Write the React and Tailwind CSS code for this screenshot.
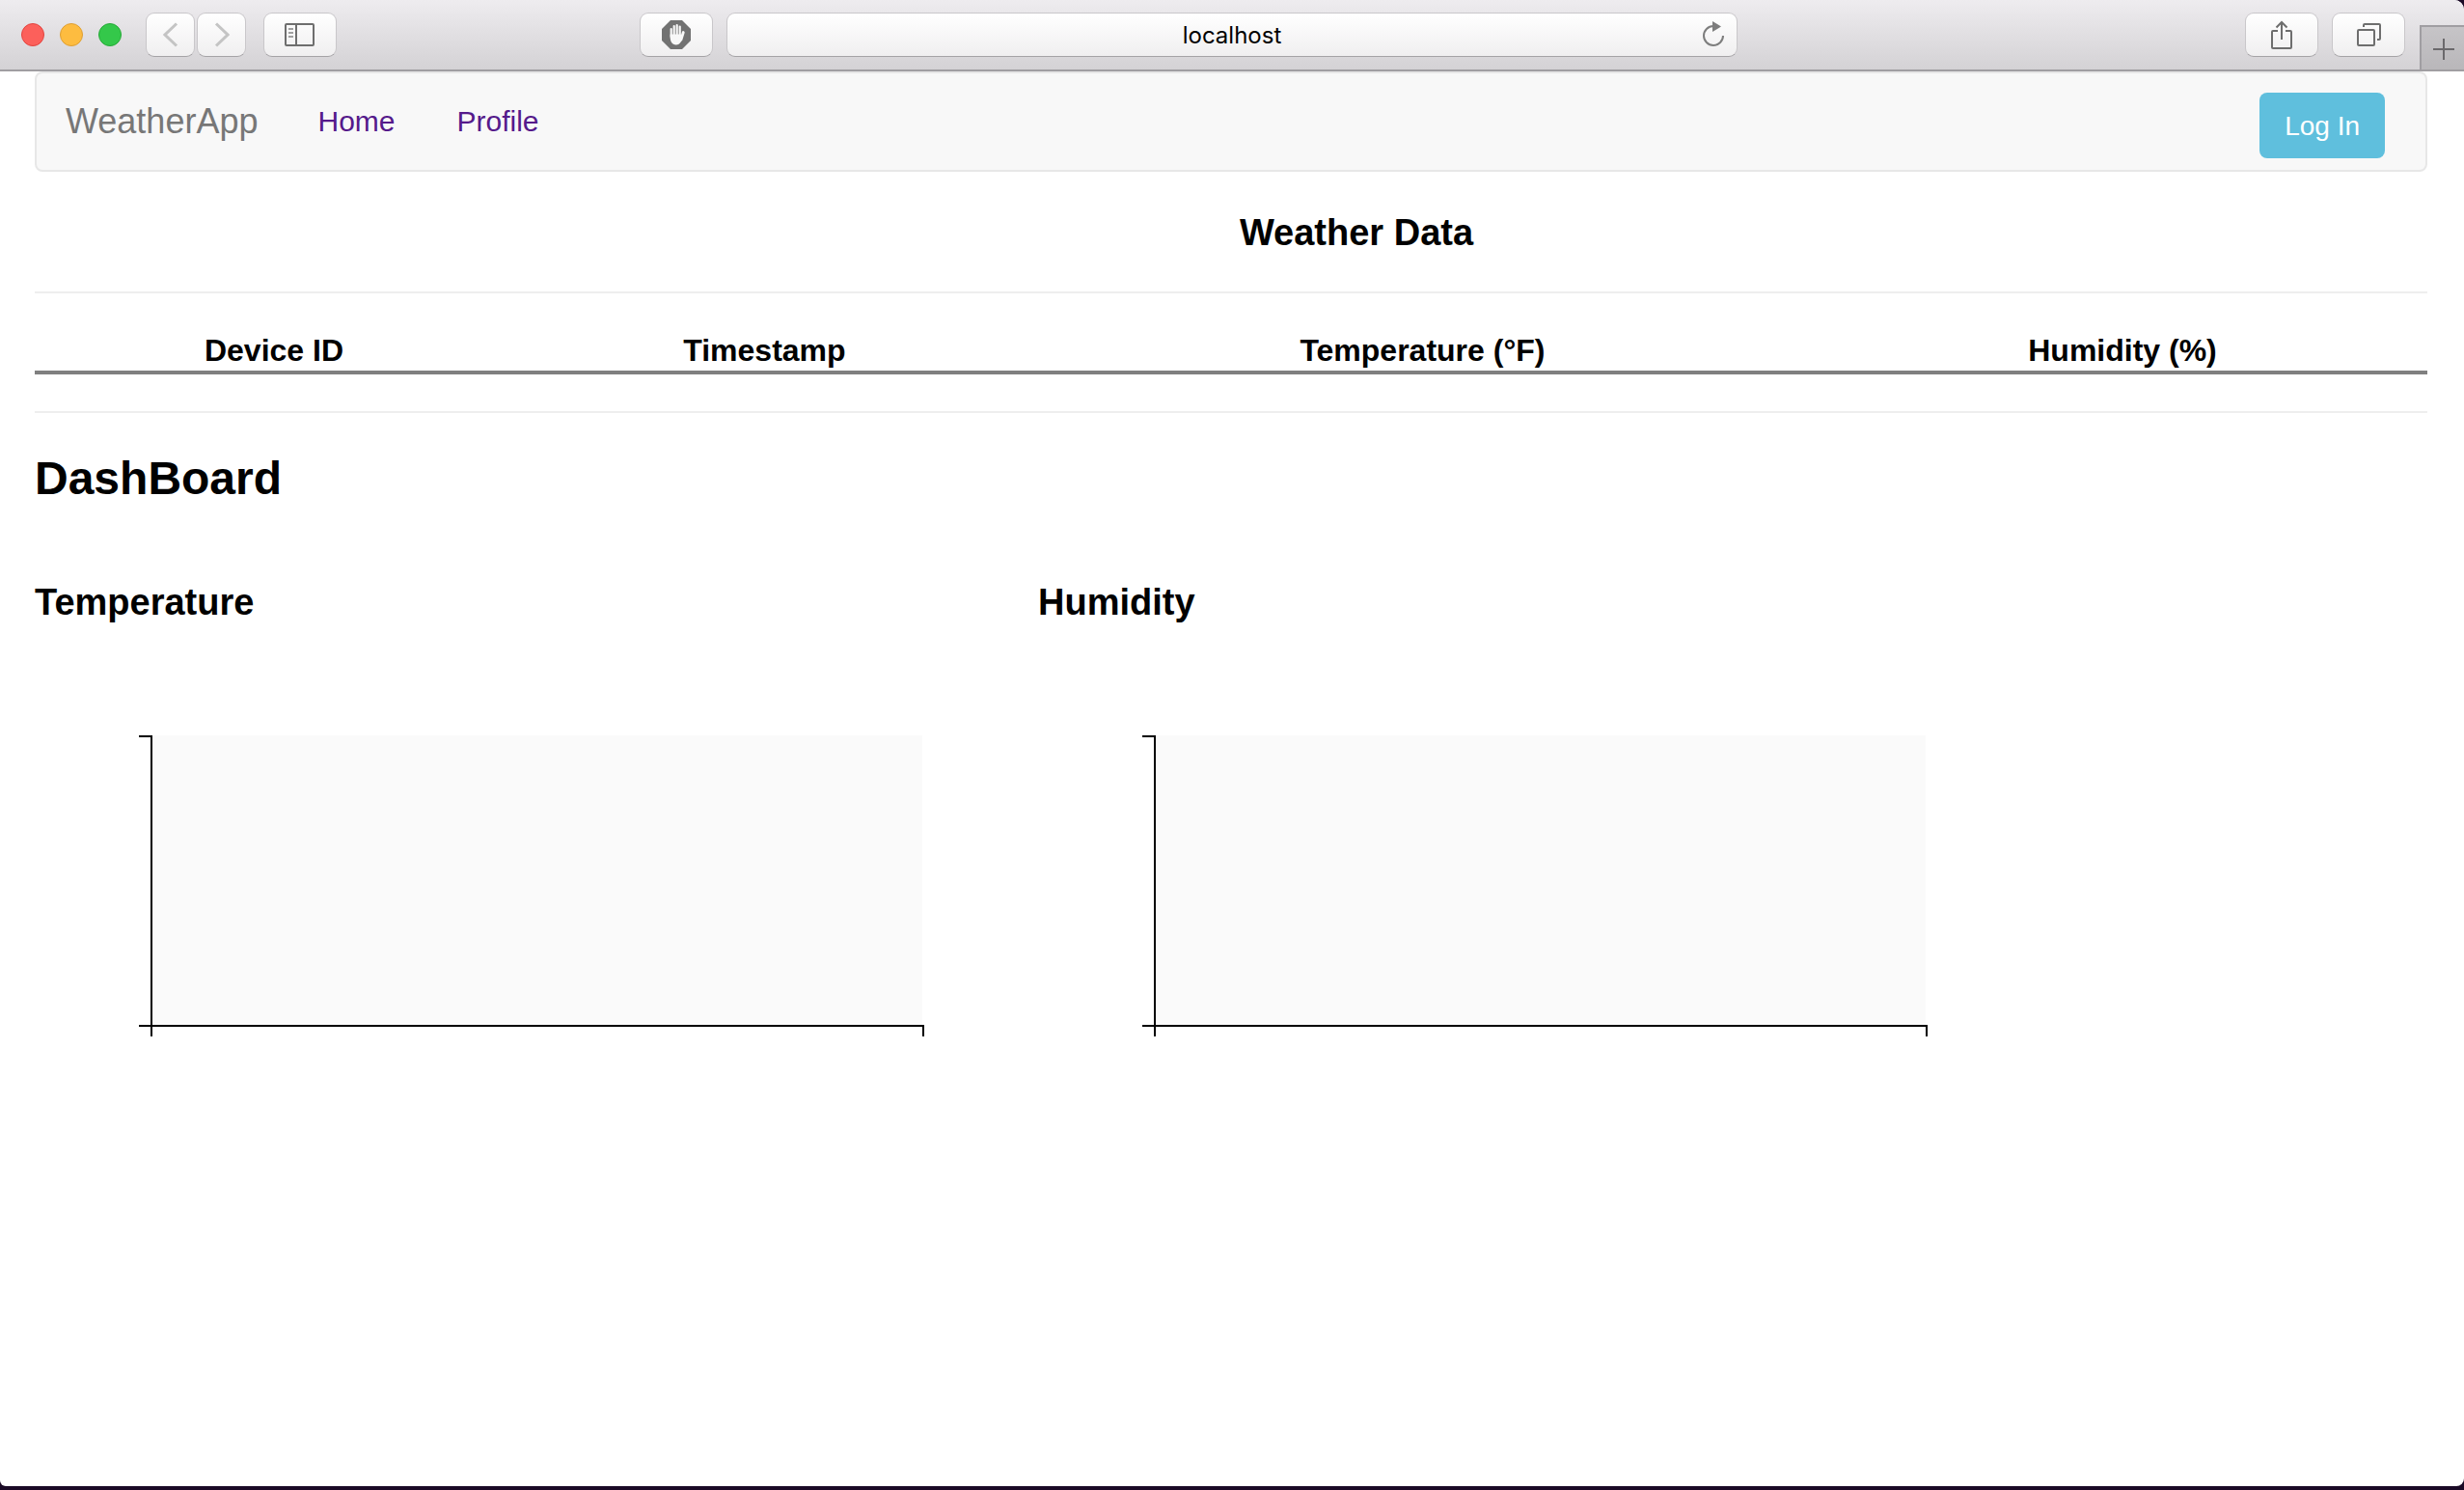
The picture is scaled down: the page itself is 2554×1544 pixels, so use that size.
const toolbarButton =
  'flex h-[46px] shrink-0 items-center justify-center rounded-[9px] border border-[#c9c7ca] border-b-[#a5a3a6] bg-linear-to-b from-white to-[#f0eff0]';

function TrafficLights() {
  return (
    <div className="flex gap-4">
      <button aria-label="Close" className="size-6 rounded-full border border-[#e2443f] bg-[#fc605b]" />
      <button aria-label="Minimize" className="size-6 rounded-full border border-[#de9f34] bg-[#fdbc40]" />
      <button aria-label="Zoom" className="size-6 rounded-full border border-[#27a938] bg-[#34c84a]" />
    </div>
  );
}

function Toolbar() {
  return (
    <header className="flex h-[74px] items-start rounded-tr-[10px] border-b-2 border-[#a09ea2] bg-linear-to-b from-[#eeecef] to-[#d4d2d5] pl-[22px]">
      <div className="flex h-[72px] flex-1 items-center">
        <TrafficLights />
        <div className="ml-[25px] flex gap-0.5">
          <button aria-label="Back" className={`${toolbarButton} w-[51px]`}>
            <svg width="16" height="26" viewBox="0 0 16 26" fill="none" stroke="#c4c4c4" strokeWidth="3">
              <path d="M14 1.5 2 13l12 11.5" />
            </svg>
          </button>
          <button aria-label="Forward" className={`${toolbarButton} w-[51px]`}>
            <svg width="16" height="26" viewBox="0 0 16 26" fill="none" stroke="#c4c4c4" strokeWidth="3">
              <path d="M2 1.5 14 13 2 24.5" />
            </svg>
          </button>
        </div>
        <button aria-label="Show sidebar" className={`${toolbarButton} ml-[18px] w-[76px]`}>
          <svg width="32" height="24" viewBox="0 0 32 24" fill="none" stroke="#6e6e6e" strokeWidth="2">
            <rect x="1" y="1" width="29" height="22" rx="1" />
            <path d="M12 1v22" />
            <path d="M4 6h5M4 10h5M4 14h5" stroke="#a0a0a0" />
          </svg>
        </button>
        <div className="flex flex-1 items-center justify-center gap-3.5 pr-[212px]">
          <button aria-label="Content blocker" className={`${toolbarButton} w-[76px]`}>
            <svg width="30" height="30" viewBox="0 0 30 30">
              <path d="M9 0h12l9 9v12l-9 9H9l-9-9V9z" fill="#727272" />
              <g stroke="#f8f8f8" strokeWidth="2.2" strokeLinecap="round">
                <path d="M9.7 9v8M12.700 6v10M15.700 5v10M18.700 6.500V16" />
                <path d="M22.300 12.500 20 20" strokeWidth="2.8" />
              </g>
              <path d="M8.600 14.500h11l1.500 2.500c0 4-2 8.500-6.300 8.500s-6.200-4-6.200-8.500z" fill="#f8f8f8" />
            </svg>
          </button>
          <div className={`${toolbarButton} w-[1048px] pr-3 pl-9`}>
            <input
              aria-label="Address"
              defaultValue="localhost"
              className="min-w-0 flex-1 bg-transparent pt-0.5 text-center font-[Inter,sans-serif] text-[24px] text-black outline-none"
            />
            <button aria-label="Reload">
              <svg width="24" height="30" viewBox="0 0 24 30" fill="none" stroke="#7d7d7d" strokeWidth="2">
                <path d="M12 6A10 10 0 1 0 22 16" />
                <path d="M11 1v11l9-5.500z" fill="#7d7d7d" stroke="none" />
              </svg>
            </button>
          </div>
        </div>
        <div className="flex gap-3.5">
          <button aria-label="Share" className={`${toolbarButton} w-[76px]`}>
            <svg width="24" height="32" viewBox="0 0 24 32" fill="none" stroke="#6e6e6e" strokeWidth="2">
              <path d="M8 12H3q-1 0-1 1v16q0 1 1 1h18q1 0 1-1V13q0-1-1-1h-5" />
              <path d="M12 21V3M6.500 8.500 12 3l5.500 5.500" />
            </svg>
          </button>
          <button aria-label="Show all tabs" className={`${toolbarButton} w-[76px]`}>
            <svg width="26" height="26" viewBox="0 0 26 26" fill="none" stroke="#6e6e6e" strokeWidth="2">
              <rect x="2" y="8" width="17" height="16" rx="1" />
              <path d="M8 5V3q0-1 1-1h15q1 0 1 1v14q0 1-1 1h-2" />
            </svg>
          </button>
        </div>
      </div>
      <button
        aria-label="New tab"
        className="ml-[15px] flex h-[46px] w-[46px] items-center justify-center self-end border-t-2 border-l-2 border-[#a09ea2] bg-linear-to-b from-[#c6c4c7] to-[#b9b7ba] pt-0.5 pl-0.5"
      >
        <svg width="22" height="22" viewBox="0 0 22 22" stroke="#6b696c" strokeWidth="2">
          <path d="M11 0v22M0 11h22" />
        </svg>
      </button>
    </header>
  );
}

function Navbar() {
  return (
    <nav className="flex h-[104px] items-start rounded-lg border-2 border-[#e7e7e7] bg-[#f8f8f8] pr-[42px] pl-[30px]">
      <a href="#" className="pt-[30px] text-[36px] leading-10 text-[#777777]">
        WeatherApp
      </a>
      <ul className="flex flex-1 gap-16 pt-[30px] pl-[62px] text-[30px] leading-10 text-[#551a8b]">
        <li>
          <a href="#home">Home</a>
        </li>
        <li>
          <a href="#profile">Profile</a>
        </li>
      </ul>
      <button className="mt-5 h-[68px] rounded-lg bg-[#5fbfdd] px-[26px] pt-0.5 text-[28px] text-white">Log In</button>
    </nav>
  );
}

function WeatherTable() {
  return (
    <table className="w-full table-fixed border-collapse text-[32px] leading-[38px]">
      <colgroup>
        <col className="w-[20%]" />
        <col className="w-[21%]" />
        <col className="w-[34%]" />
        <col className="w-[25%]" />
      </colgroup>
      <thead>
        <tr className="border-b-4 border-[#808080]">
          <th className="pb-0.5">Device ID</th>
          <th className="pb-0.5">Timestamp</th>
          <th className="pb-0.5">Temperature (°F)</th>
          <th className="pr-3 pb-0.5">Humidity (%)</th>
        </tr>
      </thead>
    </table>
  );
}

function Chart({ title }) {
  return (
    <section className="w-[1040px]">
      <h3 className="text-[38px] leading-[44px] font-bold">{title}</h3>
      <svg
        className="mt-[38px]"
        width="1040"
        height="500"
        viewBox="0 0 1040 500"
        fill="none"
        stroke="#000"
        strokeWidth="2"
        role="img"
        aria-label={`${title} chart`}
      >
        <rect x="120" y="78" width="800" height="300" fill="#fafafa" stroke="none" />
        <path d="M108 79H121V379H108" />
        <path d="M121 390V379H921V390" />
      </svg>
    </section>
  );
}

export default function App() {
  return (
    <div className="flex min-h-screen flex-col bg-[#1a0a26] pb-1 font-['Liberation_Sans',Arial,sans-serif] text-black">
      <div className="flex-1 rounded-tr-[10px] rounded-br-[8px] rounded-bl-[6px] bg-white">
        <Toolbar />
        <main className="mr-[38px] ml-9">
          <Navbar />
          <h3 className="mt-[41px] pl-[260px] text-center text-[38px] leading-[44px] font-bold">Weather Data</h3>
          <hr className="mt-[39px] border-t-2 border-[#eeeeee]" />
          <div className="pt-10 pb-[38px]">
            <WeatherTable />
          </div>
          <hr className="border-t-2 border-[#eeeeee]" />
          <h2 className="mt-10 text-[48px] leading-[56px] font-bold">DashBoard</h2>
          <div className="mt-[78px] flex flex-wrap">
            <Chart title="Temperature" />
            <Chart title="Humidity" />
          </div>
        </main>
      </div>
    </div>
  );
}
